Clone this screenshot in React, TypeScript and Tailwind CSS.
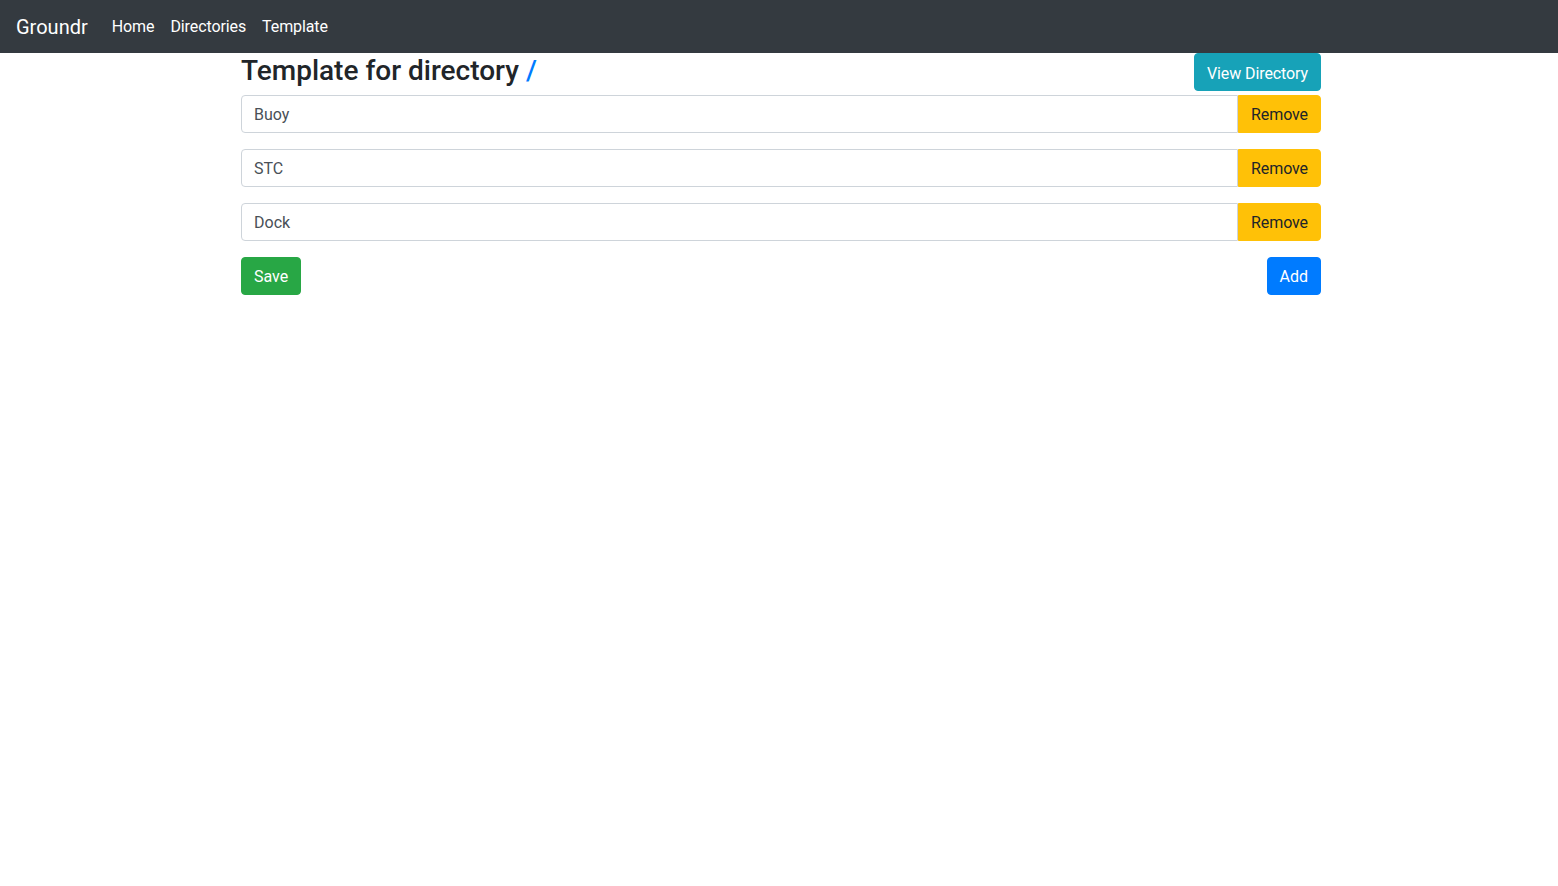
import React from "react";

const font = { fontFamily: "Roboto, 'Helvetica Neue', Arial, sans-serif" };

export default function App() {
  const items = ["Buoy", "STC", "Dock"];
  return (
    <div className="min-h-screen bg-white text-[#212529]" style={font}>
      <nav className="flex h-[53px] items-center bg-[#343a40] px-4">
        <span className="mr-4 text-[20px] leading-[30px] text-white">Groundr</span>
        <div className="flex">
          {["Home", "Directories", "Template"].map((l) => (
            <span key={l} className="px-2 text-[16px] leading-6 tracking-[-0.1px] text-white">
              {l}
            </span>
          ))}
        </div>
      </nav>
      <div className="flex justify-center pl-[4px]">
        <div className="w-[1080px]">
          <div className="flex items-start justify-between">
            <h3 className="mb-[7px] pt-px text-[28px] font-medium leading-[1.2]">
              Template for directory <span className="text-[#007bff]">/</span>
            </h3>
            <button className="rounded border border-[#17a2b8] bg-[#17a2b8] px-3 pt-[8px] pb-[4px] text-[16px] leading-6 tracking-[-0.1px] text-white">
              View Directory
            </button>
          </div>
          {items.map((it) => (
            <div key={it} className="mb-4 flex h-[38px]">
              <input
                defaultValue={it}
                className="h-[38px] flex-1 rounded-l border border-[#ced4da] px-3 pt-[7px] pb-[5px] text-[16px] leading-6 text-[#495057] outline-none"
              />
              <button className="rounded-r border border-[#ffc107] bg-[#ffc107] px-3 pt-[7px] pb-[5px] text-[16px] leading-6 tracking-[-0.1px] text-[#212529]">
                Remove
              </button>
            </div>
          ))}
          <div className="flex justify-between">
            <button className="rounded border border-[#28a745] bg-[#28a745] px-3 pt-[7px] pb-[5px] text-[16px] leading-6 text-white">
              Save
            </button>
            <button className="rounded border border-[#007bff] bg-[#007bff] px-3 pt-[7px] pb-[5px] text-[16px] leading-6 text-white">
              Add
            </button>
          </div>
        </div>
      </div>
    </div>
  );
}
